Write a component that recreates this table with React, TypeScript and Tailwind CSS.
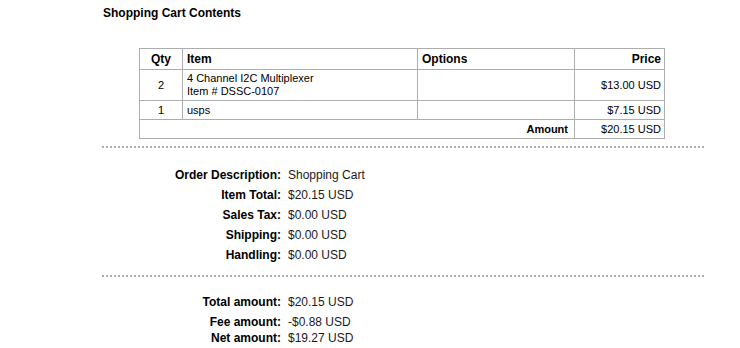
const cartItems = [
  { qty: 2, name: '4 Channel I2C Multiplexer', sku: 'DSSC-0107', options: '', price: '$13.00 USD' },
  { qty: 1, name: 'usps', sku: '', options: '', price: '$7.15 USD' },
]

const orderSummary = [
  { label: 'Order Description:', value: 'Shopping Cart' },
  { label: 'Item Total:', value: '$20.15 USD' },
  { label: 'Sales Tax:', value: '$0.00 USD' },
  { label: 'Shipping:', value: '$0.00 USD' },
  { label: 'Handling:', value: '$0.00 USD' },
]

function SummaryRow({ label, value, tight }: { label: string; value: string; tight?: boolean }) {
  return (
    <div className={`flex ${tight ? 'leading-[16px]' : 'h-[20px] items-center leading-[14px]'}`}>
      <div className="w-[179px] text-right font-bold text-black">{label}</div>
      <div className="pl-[7px] text-[#1a1a1a]">{value}</div>
    </div>
  )
}

export default function App() {
  return (
    <div className="min-h-[348px] w-[740px] bg-white font-['Liberation_Sans',Arial,sans-serif] text-black">
      <div className="ml-[102px] w-[602px] pt-[6px]">
        <h2 className="pl-px text-[12px] font-bold leading-[14px]">Shopping Cart Contents</h2>

        {/* cart table */}
        <table className="ml-[37px] mt-[28px] w-[525px] table-fixed border-collapse text-[11px]">
          <colgroup>
            <col className="w-[43px]" />
            <col className="w-[235px]" />
            <col className="w-[157px]" />
            <col className="w-[90px]" />
          </colgroup>
          <thead>
            <tr className="text-[12px] font-bold leading-[14px]">
              <th className="border border-[#adadad] py-[3px] text-center">Qty</th>
              <th className="border border-[#adadad] px-[4px] py-[3px] text-left">Item</th>
              <th className="border border-[#adadad] px-[4px] py-[3px] text-left">Options</th>
              <th className="border border-[#adadad] px-[3px] py-[3px] text-right">Price</th>
            </tr>
          </thead>
          <tbody>
            {cartItems.map((item, i) => (
              <tr key={i} className={item.sku ? 'leading-[13px]' : 'leading-[14px]'}>
                <td className="border border-[#adadad] py-[2px] text-center">{item.qty}</td>
                <td className="border border-[#adadad] px-[4px] py-[2px]">
                  <div>{item.name}</div>
                  {item.sku && <div>Item # {item.sku}</div>}
                </td>
                <td className="border border-[#adadad] px-[4px] py-[2px]">{item.options}</td>
                <td className="border border-[#adadad] px-[3px] py-[2px] text-right">{item.price}</td>
              </tr>
            ))}
            <tr className="leading-[14px]">
              <td colSpan={3} className="border border-[#adadad] px-[6px] py-[2px] text-right font-bold">
                Amount
              </td>
              <td className="border border-[#adadad] px-[3px] py-[2px] text-right">$20.15 USD</td>
            </tr>
          </tbody>
        </table>

        <div className="mt-[7px] border-t-2 border-dotted border-[#adadad]" />

        <div className="mt-[17px] text-[12px]">
          {orderSummary.map((row) => (
            <SummaryRow key={row.label} label={row.label} value={row.value} />
          ))}
        </div>

        <div className="mt-[10px] border-t-2 border-dotted border-[#adadad]" />

        <div className="mt-[15px] text-[12px]">
          <SummaryRow label="Total amount:" value="$20.15 USD" />
          <div className="mt-[2px]">
            <SummaryRow label="Fee amount:" value="-$0.88 USD" tight />
            <SummaryRow label="Net amount:" value="$19.27 USD" tight />
          </div>
        </div>
      </div>
    </div>
  )
}
